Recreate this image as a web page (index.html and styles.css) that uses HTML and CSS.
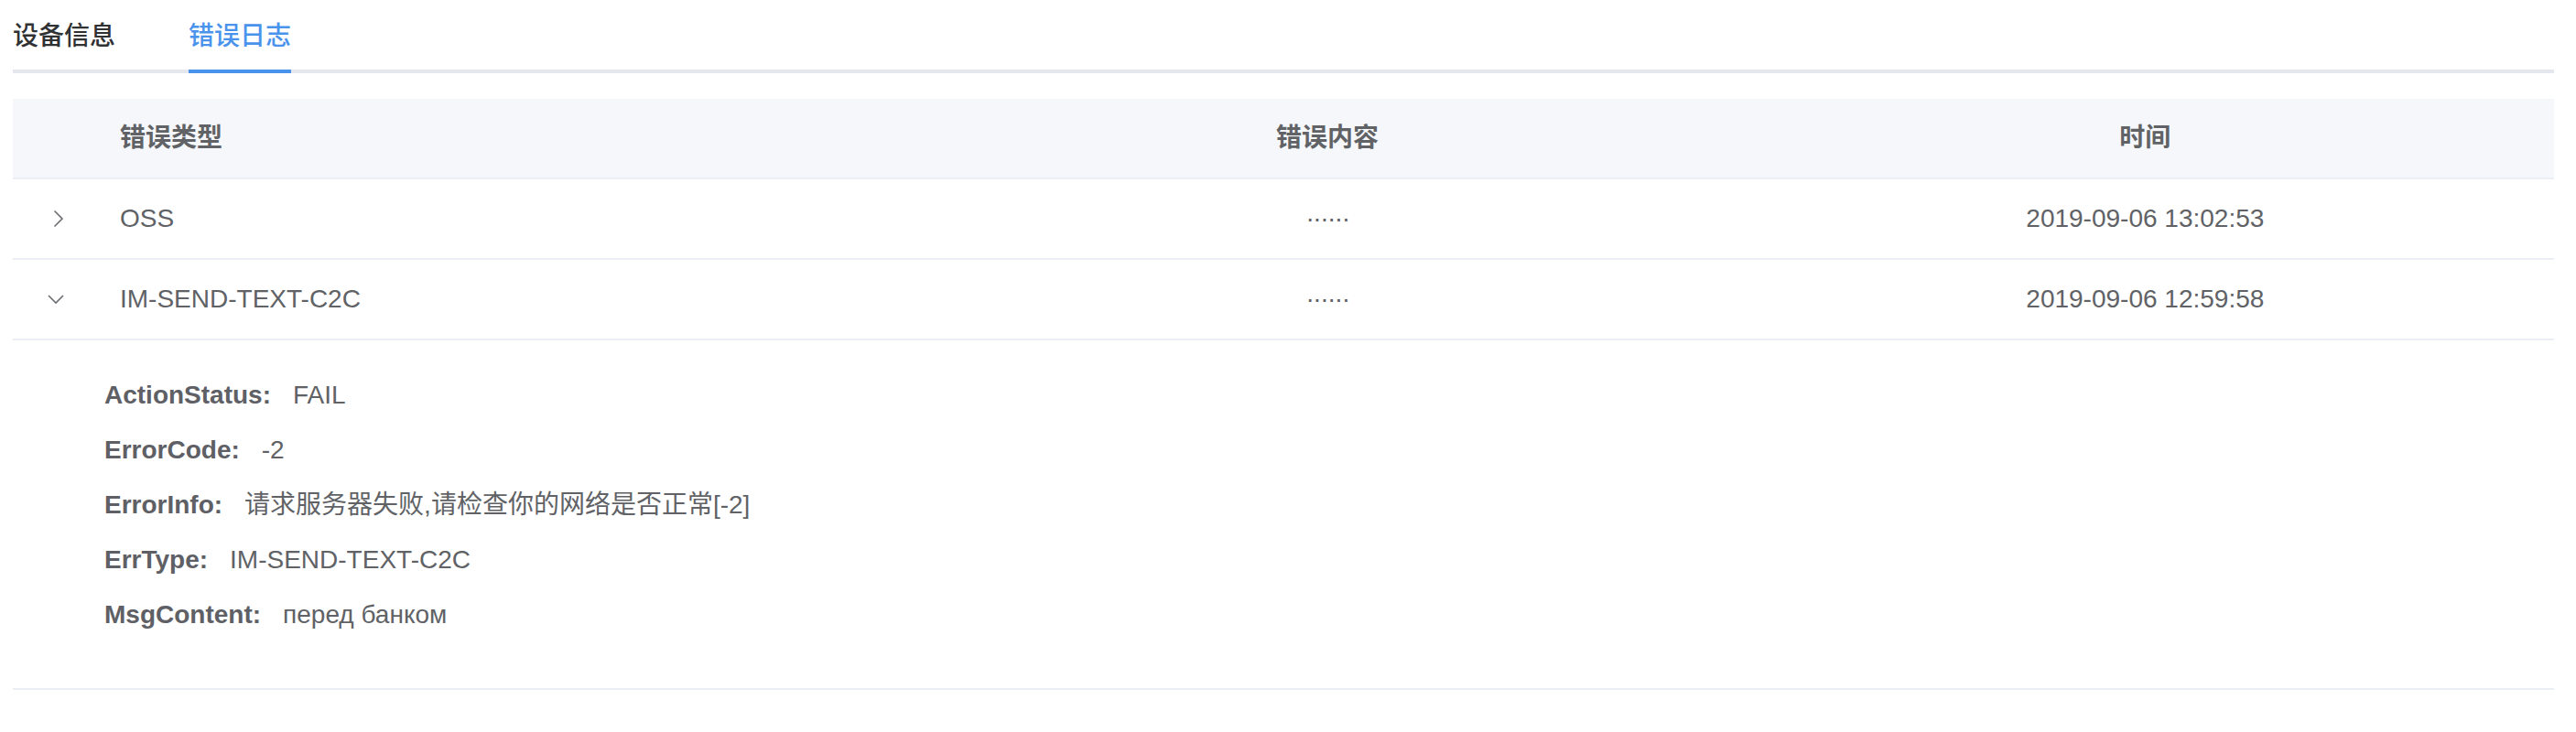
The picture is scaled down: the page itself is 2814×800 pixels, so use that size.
FILE: index.html
```html
<!DOCTYPE html>
<html lang="zh-CN">
<head>
<meta charset="utf-8">
<title>错误日志</title>
<link rel="stylesheet" href="styles.css">
</head>
<body>
<div class="page">
  <div class="tabs">
    <div class="tab">设备信息</div>
    <div class="tab active">错误日志</div>
  </div>
  <div class="table">
    <div class="row head">
      <div class="cell expand"></div>
      <div class="cell">错误类型</div>
      <div class="cell center">错误内容</div>
      <div class="cell center">时间</div>
    </div>
    <div class="row">
      <div class="cell expand">
        <svg class="chev" width="24" height="24" viewBox="0 0 24 24"><polyline points="9.5,3.5 18,12 9.5,20.5"/></svg>
      </div>
      <div class="cell">OSS</div>
      <div class="cell center dots">······</div>
      <div class="cell center">2019-09-06 13:02:53</div>
    </div>
    <div class="row">
      <div class="cell expand">
        <svg class="chev" width="24" height="24" viewBox="0 0 24 24"><polyline points="3,8 11,16 19,8"/></svg>
      </div>
      <div class="cell">IM-SEND-TEXT-C2C</div>
      <div class="cell center dots">······</div>
      <div class="cell center">2019-09-06 12:59:58</div>
    </div>
    <div class="expanded">
      <div class="item"><span class="label">ActionStatus:</span><span class="value">FAIL</span></div>
      <div class="item"><span class="label">ErrorCode:</span><span class="value">-2</span></div>
      <div class="item"><span class="label">ErrorInfo:</span><span class="value">请求服务器失败,请检查你的网络是否正常[-2]</span></div>
      <div class="item"><span class="label">ErrType:</span><span class="value">IM-SEND-TEXT-C2C</span></div>
      <div class="item"><span class="label">MsgContent:</span><span class="value">перед банком</span></div>
    </div>
  </div>
</div>
</body>
</html>
```

FILE: styles.css
```css
* { box-sizing: border-box; }
html, body { margin: 0; padding: 0; background: #fff; }
body {
  font-family: "Liberation Sans", "Noto Sans CJK SC", sans-serif;
  font-size: 28px;
  color: #606266;
}
.page {
  padding: 0 24px 0 14px;
}
.tabs {
  display: flex;
  gap: 80px;
  border-bottom: 4px solid #e4e7ed;
}
.tab {
  position: relative;
  height: 76px;
  line-height: 80px;
  font-size: 28px;
  font-weight: 500;
  color: #303133;
}
.tab.active { color: #4a93ec; }
.tab.active::after {
  content: "";
  position: absolute;
  left: 0;
  right: 0;
  bottom: -4px;
  height: 4px;
  background: #4a93ec;
}
.table {
  margin-top: 28px;
}
.row {
  display: grid;
  grid-template-columns: 96px 1fr 1fr 1fr;
  border-bottom: 2px solid #ebeef5;
}
.row.head {
  background: #f5f7fa;
  font-weight: 700;
  color: #606266;
}
.cell {
  padding: 20px 21px;
  line-height: 46px;
  white-space: nowrap;
}
.cell.center { text-align: center; }
.cell.expand {
  display: flex;
  align-items: center;
  justify-content: center;
  padding: 20px 0;
}
.chev {
  display: block;
  fill: none;
  stroke: #6a6d72;
  stroke-width: 1.6;
}
.dots {
  letter-spacing: -1.5px;
}
.expanded {
  padding: 40px 100px;
  border-bottom: 2px solid #ebeef5;
}
.item {
  height: 40px;
  line-height: 40px;
  margin-bottom: 20px;
  display: flex;
  gap: 24px;
}
.label {
  font-weight: 700;
  color: #5e6066;
}
.value {
  color: #606266;
}
```
